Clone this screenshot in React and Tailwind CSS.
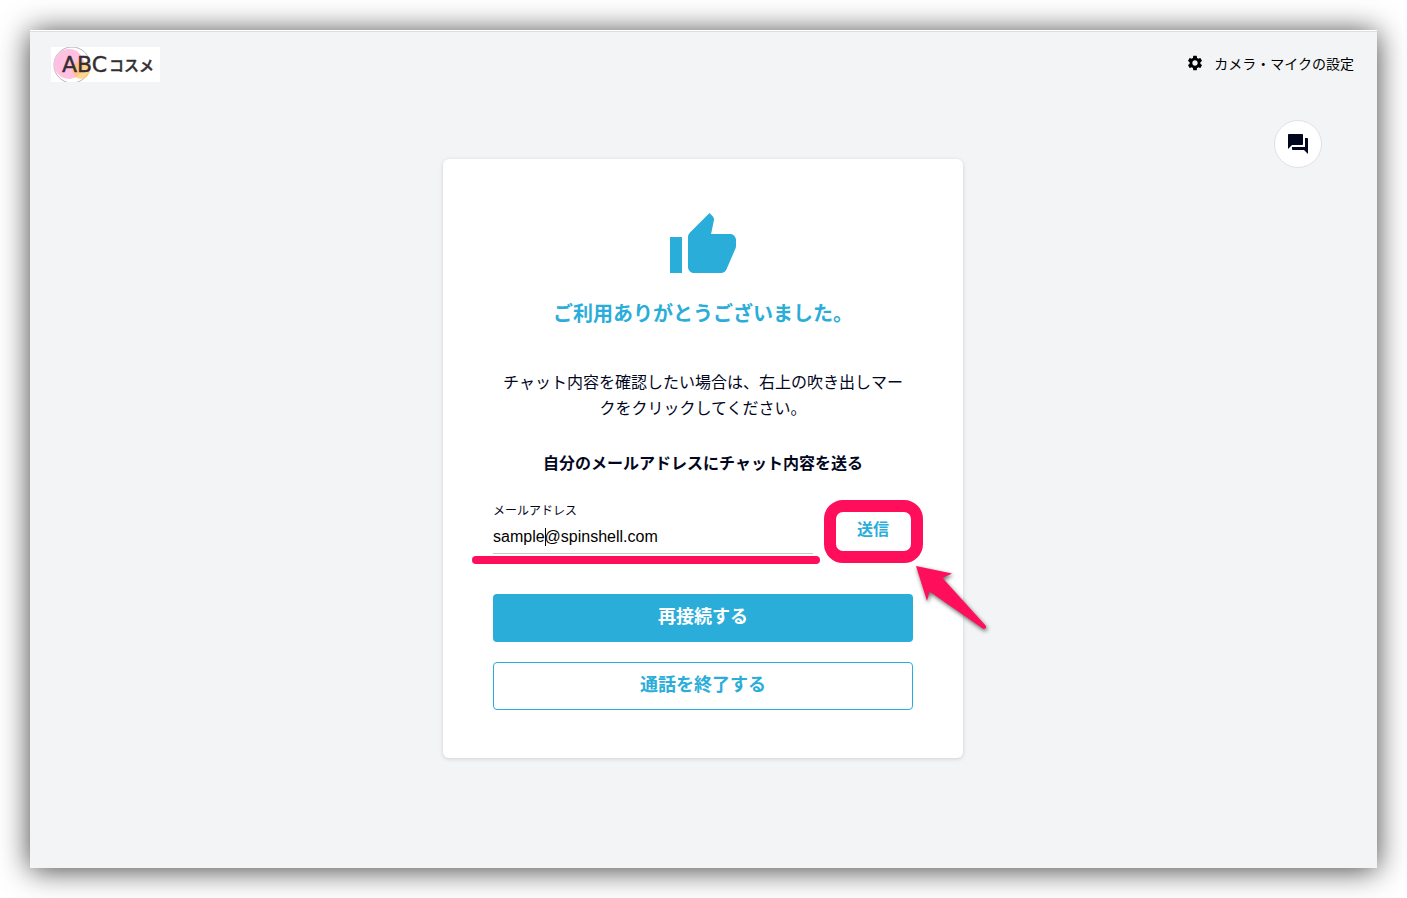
import React, { useState } from 'react'
import { MdQuestionAnswer, MdSettings, MdThumbUp } from 'react-icons/md'

const Logo = () => {
    return (
        <svg viewBox="0 0 109 35" className="w-[109px] h-[35px] bg-white" role="img" aria-label="ABCコスメ">
            <circle cx="21" cy="18" r="18" fill="none" stroke="#b9b6b8" strokeWidth="1" />
            <circle cx="18" cy="17" r="15" fill="#ffc0e2" />
            <circle cx="30" cy="23" r="9" fill="#ffc46b" fillOpacity="0.75" />
            <g fill="#332d30" stroke="#332d30" strokeWidth="0.4">
                <text x="11" y="25" fontFamily="'DejaVu Sans', sans-serif" fontSize="22">ABC</text>
                <text x="58" y="24" fontFamily="'Noto Sans CJK JP', sans-serif" fontSize="15" fontWeight="500">コスメ</text>
            </g>
        </svg>
    )
}

const Header = () => {
    return (
        <header className="flex items-start justify-between h-[88px] pt-[15px] pl-[21px] pr-[23px]">
            <Logo />
            <button type="button" className="flex items-center gap-[10px] h-8 text-sm text-black">
                <MdSettings className="w-[18px] h-[18px]" />
                カメラ・マイクの設定
            </button>
        </header>
    )
}

const Arrow = () => {
    return (
        <svg viewBox="0 0 80 76" className="absolute left-[82px] top-[60px] w-[80px] h-[76px] z-10 drop-shadow-[1px_2px_2px_rgba(0,0,0,0.6)] pointer-events-none" aria-hidden="true">
            <path d="M1 4 L37 11.5 L27.500 16 L71 64 Q71.500 67 68.500 67 L14.500 29.500 L12 39 Z" fill="#ff0f5b" />
        </svg>
    )
}

const MailForm = () => {
    const [mail, setMail] = useState('sample@spinshell.com')

    return (
        <form className="flex gap-5 mt-7" onSubmit={(e) => e.preventDefault()}>
            <div className="relative flex-1 min-w-0">
                <label htmlFor="mail" className="block text-xs leading-4">メールアドレス</label>
                <input
                    id="mail"
                    type="text"
                    value={mail}
                    onChange={(e) => setMail(e.target.value)}
                    className="block w-full h-9 pt-0.5 border-b border-[#c8c8c8] bg-transparent font-['Liberation_Sans',sans-serif] text-base text-black outline-none"
                />
                <span className="absolute left-[52px] top-[26px] w-px h-[18px] bg-black"></span>
                <span className="absolute -left-[21px] -right-[7px] top-[54px] h-2 rounded-full bg-[#ff0f5b]"></span>
            </div>
            <div className="relative flex w-20 items-center justify-center">
                <button type="submit" className="w-full h-9 font-bold text-[#2badda]">送信</button>
                <span className="absolute -left-[9px] -right-[10px] -top-[2px] h-[63px] rounded-[19px] border-[12px] border-[#ff0f5b] pointer-events-none"></span>
                <Arrow />
            </div>
        </form>
    )
}

const EndCard = () => {
    return (
        <section className="w-full max-w-[520px] mt-[39px] mb-10 px-[50px] pt-[51px] pb-12 rounded-md bg-white shadow-[0_1px_4px_rgba(0,0,0,0.15)]">
            <MdThumbUp className="w-[72px] h-[72px] mx-auto text-[#2badda]" />
            <h1 className="mt-[15px] text-center text-xl leading-8 font-bold text-[#2badda]">ご利用ありがとうございました。</h1>
            <p className="mt-[39px] px-2 text-center text-base leading-[26px]">
                チャット内容を確認したい場合は、右上の吹き出しマークをクリックしてください。
            </p>
            <h2 className="mt-[30px] text-center text-base leading-6 font-bold">自分のメールアドレスにチャット内容を送る</h2>
            <MailForm />
            <div className="flex flex-col gap-5 mt-10">
                <button type="button" className="h-12 pb-1.5 rounded bg-[#2badda] text-lg font-bold text-white">再接続する</button>
                <button type="button" className="h-12 pb-1.5 rounded border border-[#2badda] bg-white text-lg font-bold text-[#2badda]">通話を終了する</button>
            </div>
        </section>
    )
}

const App = () => {
    return (
        <div className="flex min-h-screen p-[30px] bg-white font-['Noto_Sans_CJK_JP',sans-serif] text-[#03071e]">
            <div className="flex-1 bg-[#f2f4f6] border-t border-white shadow-[0_2px_28px_rgba(0,0,0,0.75)]">
                <div className="border-t border-[#dcdee0]">
                    <Header />
                    <main className="grid">
                        <div className="col-start-1 row-start-1 flex justify-center pr-px">
                            <EndCard />
                        </div>
                        <button type="button" aria-label="チャット" className="col-start-1 row-start-1 justify-self-end flex items-center justify-center w-12 h-12 mr-[55px] rounded-full border border-[#dfe1e8] bg-white">
                            <MdQuestionAnswer className="w-6 h-6" />
                        </button>
                    </main>
                </div>
            </div>
        </div>
    )
}

export default App
